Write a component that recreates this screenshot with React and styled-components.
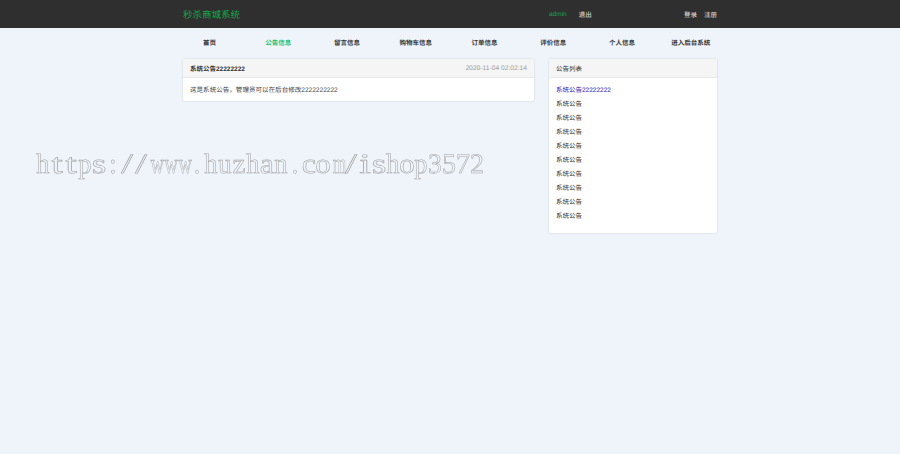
import React from "react";
import styled, { createGlobalStyle } from "styled-components";

const Global = createGlobalStyle`
  html, body { margin: 0; padding: 0; background: #eff4fb; }
  body { font-family: "Liberation Sans", "Noto Sans CJK SC", sans-serif; color: #333; text-rendering: geometricPrecision; }
`;
const Page = styled.div`
  position: relative;
  width: 900px;
  height: 454px;
  overflow: hidden;
  background: #eff4fb;
`;
const TopBar = styled.header`
  height: 28px;
  background: #2f2f2f;
  display: flex;
  justify-content: center;
`;
const TopInner = styled.div`
  width: 534px;
  display: flex;
  align-items: center;
`;
const Brand = styled.div`
  font-size: 9.5px;
  color: #16a94a;
  width: 366px;
`;
const UserArea = styled.div`
  display: flex;
  align-items: center;
  gap: 12px;
  flex: 1;
`;
const TopLink = styled.span`
  font-size: 6.5px;
  color: ${(p) => (p.$green ? "#16a94a" : "#e8e8e8")};
`;
const AuthArea = styled.div`
  display: flex;
  gap: 7px;
`;
const Nav = styled.nav`
  width: 550px;
  height: 31px;
  padding-bottom: 4px;
  box-sizing: border-box;
  margin: 0 auto;
  display: grid;
  grid-template-columns: repeat(8, 1fr);
  align-items: center;
`;
const NavItem = styled.a`
  font-size: 6.5px;
  font-weight: 700;
  text-align: center;
  color: ${(p) => (p.$active ? "#1bbf6b" : "#333")};
`;
const Content = styled.main`
  width: 534px;
  margin: 0 auto;
  display: flex;
  align-items: flex-start;
  justify-content: space-between;
`;
const Card = styled.section`
  width: ${(p) => p.$width}px;
  background: #fff;
  border-radius: 2px;
  box-shadow: 0 0 2px rgba(0, 0, 0, 0.18);
`;
const CardHeader = styled.div`
  height: 19px;
  padding: 0 7px;
  display: flex;
  align-items: center;
  justify-content: space-between;
  background: #f5f5f5;
  border-bottom: 1px solid #e8e8e8;
  box-sizing: border-box;
  font-size: 6.5px;
`;
const HeaderTitle = styled.span`
  font-weight: ${(p) => (p.$bold ? 700 : 400)};
  color: #333;
`;
const DateText = styled.span`
  font-size: 6.7px;
  color: #999;
`;
const CardBody = styled.div`
  height: 23px;
  padding: 0 7px 2px;
  box-sizing: border-box;
  display: flex;
  align-items: center;
  font-size: 6.55px;
  color: #444;
`;
const List = styled.ul`
  list-style: none;
  margin: 0;
  padding: 6px 7px 10px;
  height: 155px;
  box-sizing: border-box;
`;
const ListItem = styled.li`
  height: 14px;
  line-height: 14px;
  font-size: 6.5px;
  color: ${(p) => (p.$link ? "#2a22b8" : "#333")};
`;
const Watermark = styled.div`
  position: absolute;
  left: 36px;
  top: 148px;
  display: flex;
  font-family: "Liberation Serif", serif;
  font-size: 28px;
  line-height: 34px;
  white-space: nowrap;
  color: transparent;
  -webkit-text-stroke: 0.55px #a4a4a4;
  will-change: transform;
`;
const Glyph = styled.span`
  display: block;
  width: 14px;
  text-align: center;
  flex: none;
  transform: scaleX(${(p) => p.$scale});
`;

const navItems = ["首页", "公告信息", "留言信息", "购物车信息", "订单信息", "评价信息", "个人信息", "进入后台系统"];
const mark = "https://www.huzhan.com/ishop3572";
const scales = { m: 0.62, w: 0.66, h: 0.95, n: 0.95, u: 0.95, p: 0.95, z: 1.05, t: 1.5, s: 1.35, a: 1.15, o: 1.1, c: 1.15, i: 1.5, "/": 1.5 };
const scaleOf = (c) => scales[c] ?? 1;

export default function App() {
  return (
    <Page>
      <Global />
      <TopBar>
        <TopInner>
          <Brand>秒杀商城系统</Brand>
          <UserArea>
            <TopLink $green>admin</TopLink>
            <TopLink>退出</TopLink>
          </UserArea>
          <AuthArea>
            <TopLink>登录</TopLink>
            <TopLink>注册</TopLink>
          </AuthArea>
        </TopInner>
      </TopBar>
      <Nav>
        {navItems.map((n, i) => (
          <NavItem key={n} $active={i === 1}>{n}</NavItem>
        ))}
      </Nav>
      <Content>
        <Card $width={351}>
          <CardHeader>
            <HeaderTitle $bold>系统公告22222222</HeaderTitle>
            <DateText>2020-11-04 02:02:14</DateText>
          </CardHeader>
          <CardBody>这是系统公告，管理员可以在后台修改2222222222</CardBody>
        </Card>
        <Card $width={168}>
          <CardHeader>
            <HeaderTitle>公告列表</HeaderTitle>
          </CardHeader>
          <List>
            <ListItem $link>系统公告22222222</ListItem>
            {Array.from({ length: 9 }, (_, i) => (
              <ListItem key={i}>系统公告</ListItem>
            ))}
          </List>
        </Card>
      </Content>
      <Watermark aria-label={mark}>
        {mark.split("").map((c, i) => (
          <Glyph key={i} $scale={scaleOf(c)}>{c}</Glyph>
        ))}
      </Watermark>
    </Page>
  );
}
